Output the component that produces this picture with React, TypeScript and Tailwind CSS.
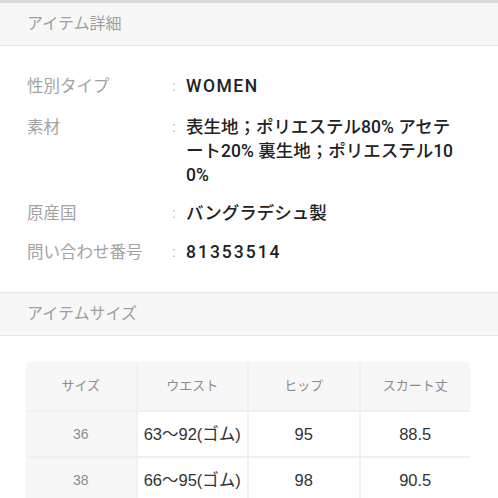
import React from "react";

const font = { fontFamily: '"Liberation Sans", "Noto Sans CJK JP", sans-serif' };
const valueFont = { fontFamily: 'Roboto, "Noto Sans CJK JP", sans-serif' };

const rows: { label: string; value: string[]; track: string }[] = [
  { label: "性別タイプ", value: ["WOMEN"], track: "tracking-[1.5px]" },
  { label: "素材", value: ["表生地；ポリエステル80% アセテ", "ート20% 裏生地；ポリエステル10", "0%"], track: "" },
  { label: "原産国", value: ["バングラデシュ製"], track: "" },
  { label: "問い合わせ番号", value: ["81353514"], track: "tracking-[2px]" },
];

const sizes = [
  ["36", "63〜92(ゴム)", "95", "88.5"],
  ["38", "66〜95(ゴム)", "98", "90.5"],
];

export default function App() {
  return (
    <div className="w-[498px] h-[498px] overflow-hidden bg-white" style={font}>
      <div className="h-[3px] bg-[#d9d9d9]" />
      <div className="h-[43px] bg-[#f7f7f7] border-b border-[#e6e6e6] flex items-center pl-[27px] text-[16px] text-[#a0a0a0]">
        アイテム詳細
      </div>
      <div className="pt-[28px] pb-[28px] flex flex-col">
        {rows.map((r, i) => (
          <div key={i} className={`flex ${i === 0 ? "" : i === 1 ? "mt-[17px]" : i === 2 ? "mt-[14px]" : "mt-[15px]"}`}>
            <div className="w-[172px] pl-[27px] text-[16.5px] leading-[24px] text-[#a3a3a3] shrink-0 whitespace-nowrap">{r.label}</div>
            <div className="w-[14px] text-[14px] leading-[24px] text-[#b5b5b5] shrink-0">:</div>
            <div className={`text-[17.5px] leading-[24px] font-medium text-[#222] whitespace-nowrap ${r.track}`} style={valueFont}>
              {r.value.map((v, j) => (
                <div key={j}>{v}</div>
              ))}
            </div>
          </div>
        ))}
      </div>
      <div className="h-[44px] bg-[#f7f7f7] border-y border-[#e6e6e6] flex items-center pl-[27px] text-[16px] text-[#a0a0a0]">
        アイテムサイズ
      </div>
      <div className="pt-[26px] pl-[26px]">
        <div className="w-[444px] grid grid-cols-4 gap-[2px] bg-[#f1f1f1]">
          {["サイズ", "ウエスト", "ヒップ", "スカート丈"].map((h) => (
            <div key={h} className="h-[48px] bg-[#f7f7f7] flex items-center justify-center text-[13px] text-[#8c8c8c]">
              {h}
            </div>
          ))}
          {sizes.map((row) =>
            row.map((c, j) =>
              j === 0 ? (
                <div key={c + j} className="h-[44px] bg-[#f7f7f7] flex items-center justify-center text-[14px] text-[#8c8c8c]">
                  {c}
                </div>
              ) : (
                <div key={c + j} className="h-[44px] bg-white flex items-center justify-center text-[16.5px] text-[#333]">
                  {c}
                </div>
              )
            )
          )}
        </div>
      </div>
    </div>
  );
}
